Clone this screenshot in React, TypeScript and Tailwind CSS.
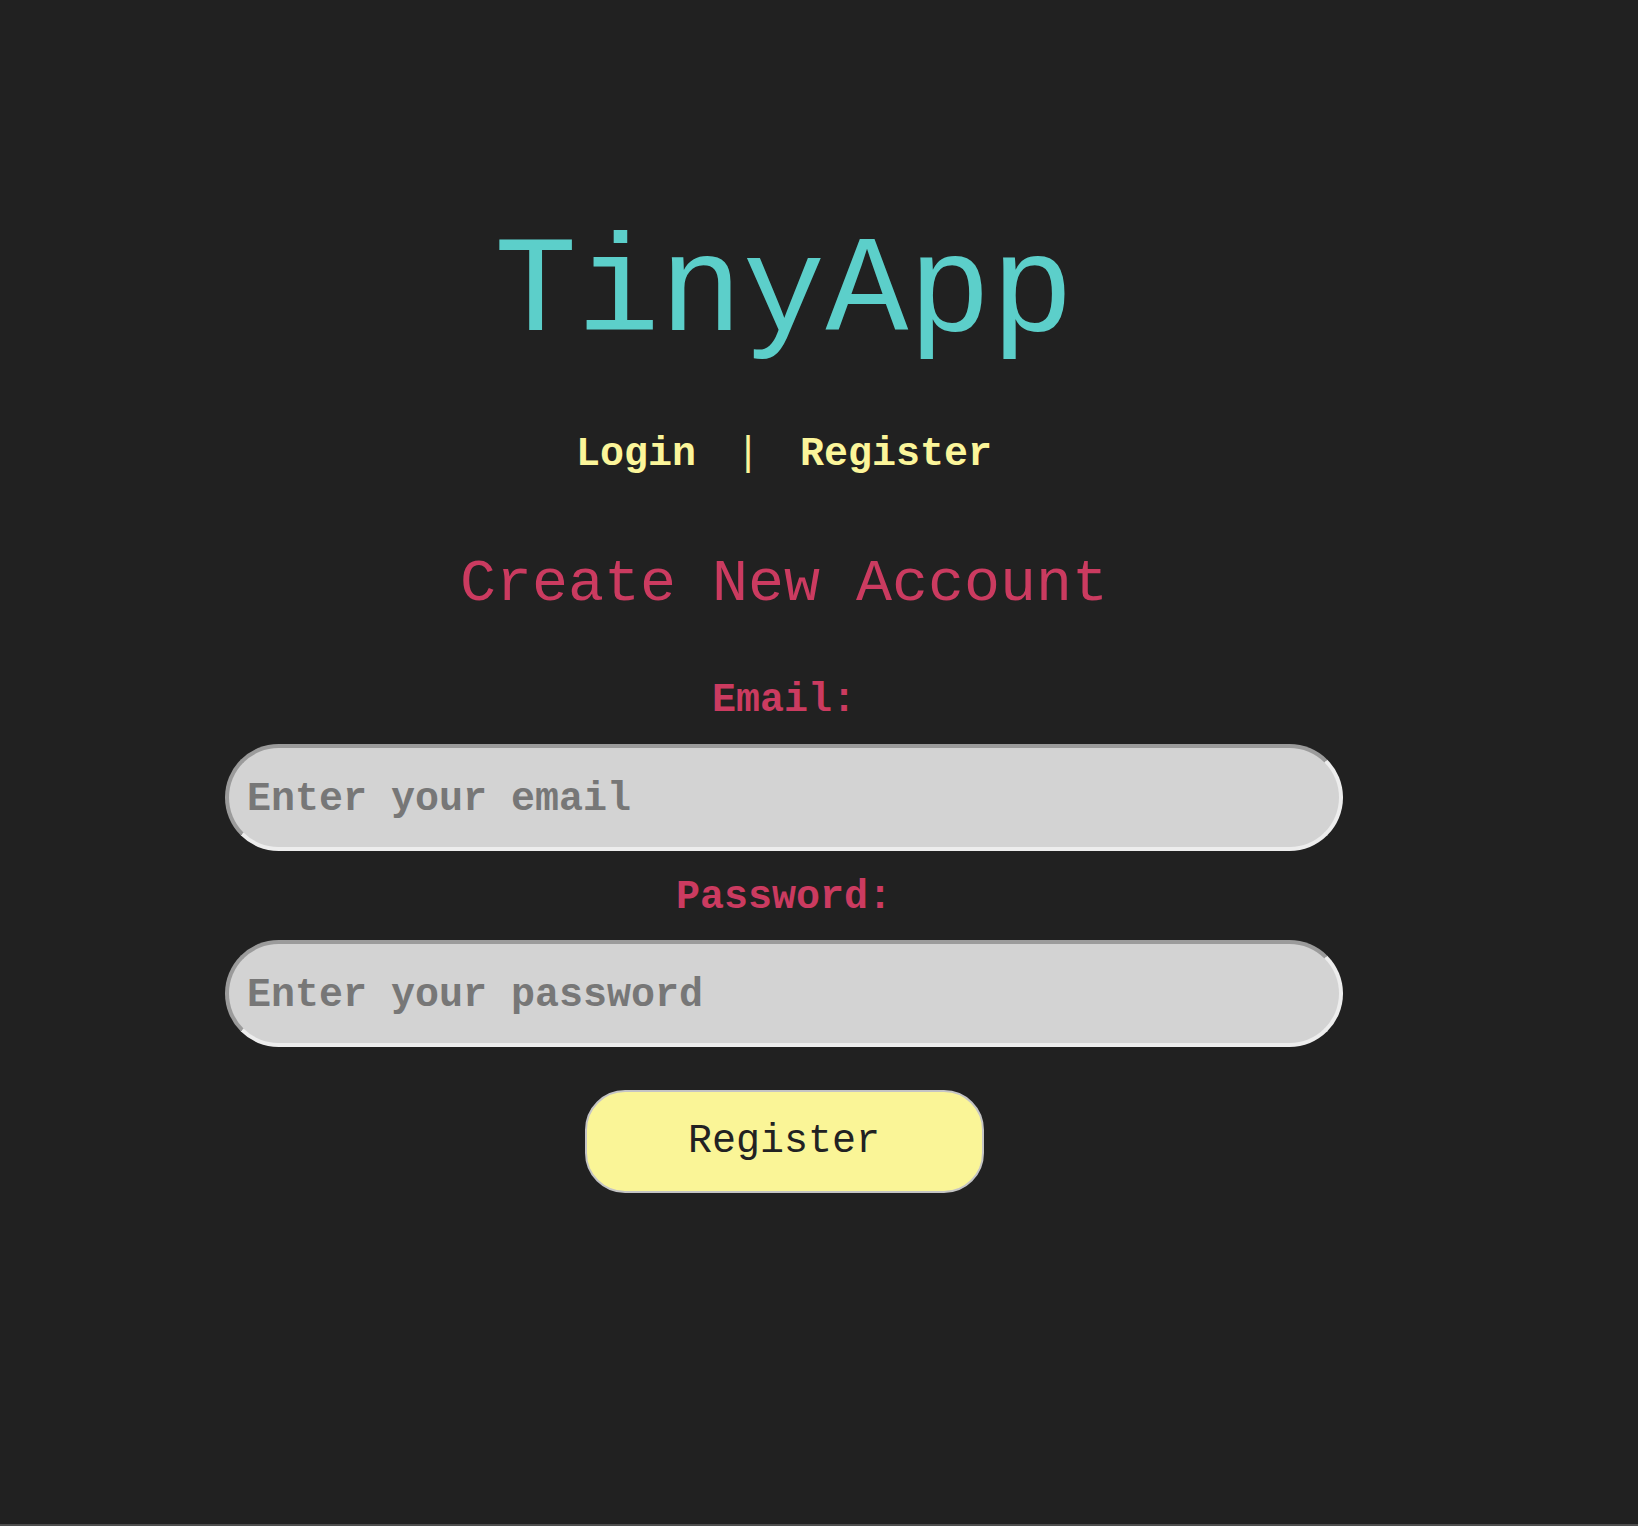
import { useState } from 'react'

const mono = "font-['Liberation_Mono','Courier_New',monospace]"

export default function App() {
  const [email, setEmail] = useState('')
  const [password, setPassword] = useState('')

  return (
    <div className={`min-h-[1526px] bg-[#212121] border-b-2 border-[#4d4d4d] ${mono}`}>
      <div className="w-[1568px] flex flex-col items-center">
        <h1 className="mt-[224px] text-[138px] leading-none font-normal text-[#5ccfca]">TinyApp</h1>

        <nav className="mt-[73px] flex items-center gap-[40px] text-[40px] leading-none font-bold text-[#fbf59a]">
          <a href="#">Login</a>
          <span className="font-normal">|</span>
          <a href="#">Register</a>
        </nav>

        <h2 className="mt-[79px] text-[60px] leading-none font-normal text-[#cb3b60]">Create New Account</h2>

        <form className="flex flex-col items-center" onSubmit={e => e.preventDefault()}>
          <label htmlFor="email" className="mt-[67px] text-[40px] leading-none font-bold text-[#cb3b60]">Email:</label>
          <input id="email" type="email" value={email} onChange={e => setEmail(e.target.value)} placeholder="Enter your email"
            className="mt-[23px] w-[1118px] h-[107px] rounded-full bg-[#d3d3d3] border-4 border-t-[#9b9b9b] border-l-[#9b9b9b] border-b-[#ededed] border-r-[#ededed] pl-[18px] pt-[4px] text-[40px] font-bold text-[#333] placeholder:text-[#777] focus:outline-none" />

          <label htmlFor="password" className="mt-[27px] text-[40px] leading-none font-bold text-[#cb3b60]">Password:</label>
          <input id="password" type="password" value={password} onChange={e => setPassword(e.target.value)} placeholder="Enter your password"
            className="mt-[22px] w-[1118px] h-[107px] rounded-full bg-[#d3d3d3] border-4 border-t-[#9b9b9b] border-l-[#9b9b9b] border-b-[#ededed] border-r-[#ededed] pl-[18px] pt-[4px] text-[40px] font-bold text-[#333] placeholder:text-[#777] focus:outline-none" />

          <button type="submit" className="mt-[43px] w-[399px] h-[103px] rounded-[40px] bg-[#faf597] border-2 border-[#c4c4c4] text-[40px] text-[#222]">
            Register
          </button>
        </form>
      </div>
    </div>
  )
}
